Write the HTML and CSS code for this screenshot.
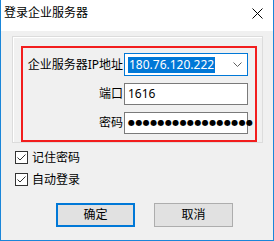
FILE: index.html
```html
<!DOCTYPE html>
<html>
<head>
<meta charset="utf-8">
<link rel="stylesheet" href="styles.css">
</head>
<body>
<div class="window">
  <div class="titlebar">
    <span class="title">登录企业服务器</span>
    <svg class="close" width="11" height="11" viewBox="0 0 11 11"><path d="M0.5 0.5 L10.5 10.5 M10.5 0.5 L0.5 10.5" stroke="#000" stroke-width="1" fill="none"/></svg>
  </div>
  <div class="client">
    <div class="groupbox">
      <div class="form">
        <div class="label">企业服务器IP地址</div>
        <div class="field combo">
          <span class="sel">180.76.120.222</span>
          <svg class="chev" width="9" height="5" viewBox="0 0 9 5"><path d="M0.5 0.5 L4.5 4.5 L8.5 0.5" stroke="#606060" stroke-width="1" fill="none"/></svg>
        </div>
        <div class="label">端口</div>
        <div class="field"><span class="val">1616</span></div>
        <div class="label">密码</div>
        <div class="field"><span class="dots">●●●●●●●●●●●●●●●●●</span></div>
      </div>
    </div>
    <div class="checks">
      <label class="check"><span class="box"><svg width="11" height="11" viewBox="0 0 11 11"><path d="M1.5 5.5 L4 8 L9.5 2.5" stroke="#333" stroke-width="1" fill="none"/></svg></span>记住密码</label>
      <label class="check"><span class="box"><svg width="11" height="11" viewBox="0 0 11 11"><path d="M1.5 5.5 L4 8 L9.5 2.5" stroke="#333" stroke-width="1" fill="none"/></svg></span>自动登录</label>
    </div>
    <div class="buttons">
      <div class="btn default">确定</div>
      <div class="btn">取消</div>
    </div>
  </div>
</div>
</body>
</html>
```
FILE: styles.css
```css
html, body {
  margin: 0;
  padding: 0;
  background: #fff;
}
body {
  font-family: "Noto Sans", "Noto Sans CJK SC", sans-serif;
  font-size: 12px;
  color: #000;
}
.window {
  width: 274px;
  height: 241px;
  box-sizing: border-box;
  border: 1px solid #1a86d9;
  border-top: none;
  display: flex;
  flex-direction: column;
}
.titlebar {
  height: 31px;
  background: #fff;
  display: flex;
  align-items: flex-start;
  justify-content: space-between;
  padding: 0 10px 0 3px;
  flex-shrink: 0;
}
.title {
  margin-top: 5px;
  line-height: 16px;
}
.close {
  margin-top: 8px;
}
.client {
  flex: 1;
  background: #f0f0f0;
  display: flex;
  flex-direction: column;
  align-items: flex-start;
}
.groupbox {
  margin: 5px 0 0 11px;
  width: 251px;
  height: 107px;
  box-sizing: border-box;
  border: 1px solid #dcdcdc;
  box-shadow: inset 1px 1px 0 #fff;
  padding: 9px 0 0 8px;
}
.form {
  width: 236px;
  height: 96px;
  box-sizing: border-box;
  border: 2px solid #f21d1d;
  display: grid;
  grid-template-columns: 100px 124px;
  grid-template-rows: 23px 22px 22px;
  column-gap: 1px;
  row-gap: 7px;
  padding-top: 5px;
  align-content: start;
}
.label {
  text-align: right;
  align-self: center;
  line-height: 16px;
  white-space: nowrap;
}
.field {
  box-sizing: border-box;
  border: 1px solid #7a7a7a;
  background: #fff;
  display: flex;
  align-items: center;
  padding-left: 3px;
  min-width: 0;
}
.combo {
  border-color: #0078d7;
  justify-content: space-between;
  padding-right: 5px;
}
.sel {
  background: #0078d7;
  color: #fff;
  line-height: 16px;
  padding: 0 1px;
}
.val {
  line-height: 16px;
}
.dots {
  font-family: "DejaVu Sans", sans-serif;
  font-size: 8px;
  letter-spacing: 0.4px;
  line-height: 16px;
  white-space: nowrap;
}
.chev {
  display: block;
}
.checks {
  margin: 8px 0 0 14px;
  display: flex;
  flex-direction: column;
  gap: 9px;
}
.check {
  display: flex;
  align-items: center;
  height: 13px;
  gap: 4px;
  line-height: 16px;
}
.box {
  width: 13px;
  height: 13px;
  box-sizing: border-box;
  border: 1px solid #333;
  background: #fff;
  display: flex;
  align-items: center;
  justify-content: center;
}
.box svg {
  display: block;
}
.buttons {
  margin: 17px 0 0 55px;
  display: flex;
  gap: 19px;
}
.btn {
  width: 79px;
  height: 24px;
  box-sizing: border-box;
  border: 1px solid #adadad;
  background: #e1e1e1;
  display: flex;
  align-items: center;
  justify-content: center;
  line-height: 16px;
}
.btn.default {
  border: 2px solid #0078d7;
}
```
